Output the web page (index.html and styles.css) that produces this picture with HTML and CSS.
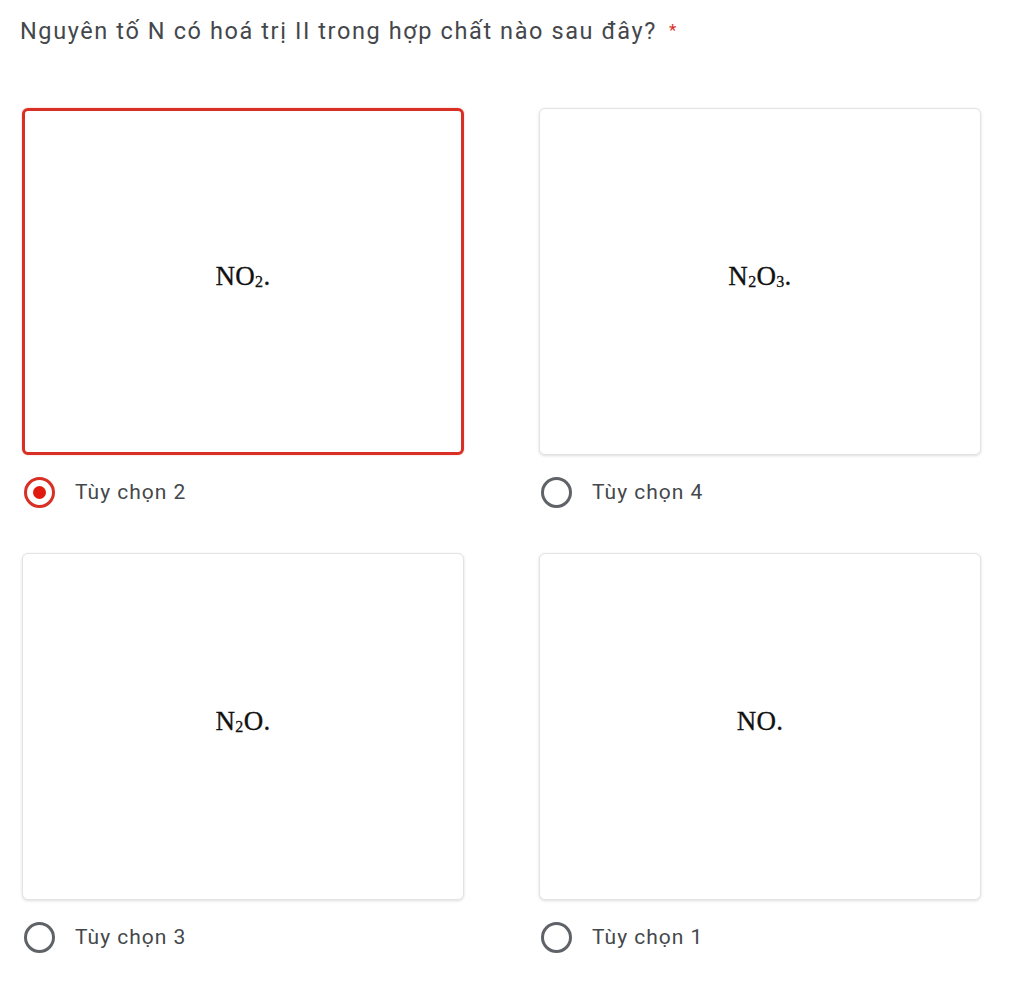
FILE: index.html
```html
<!DOCTYPE html>
<html lang="vi">
<head>
<meta charset="utf-8">
<title>Câu hỏi</title>
<link rel="stylesheet" href="styles.css">
</head>
<body>
<div class="page">
  <div class="question">Nguyên tố N có hoá trị II trong hợp chất nào sau đây?<span class="req">*</span></div>
  <div class="grid">
    <div class="option">
      <div class="card selected"><span class="formula">NO<sub>2</sub>.</span></div>
      <div class="label"><span class="radio checked"></span><span class="text">Tùy chọn 2</span></div>
    </div>
    <div class="option">
      <div class="card"><span class="formula">N<sub>2</sub>O<sub>3</sub>.</span></div>
      <div class="label"><span class="radio"></span><span class="text">Tùy chọn 4</span></div>
    </div>
    <div class="option">
      <div class="card"><span class="formula">N<sub>2</sub>O.</span></div>
      <div class="label"><span class="radio"></span><span class="text">Tùy chọn 3</span></div>
    </div>
    <div class="option">
      <div class="card"><span class="formula">NO.</span></div>
      <div class="label"><span class="radio"></span><span class="text">Tùy chọn 1</span></div>
    </div>
  </div>
</div>
</body>
</html>
```

FILE: styles.css
```css
html, body {
  margin: 0;
  padding: 0;
  background: #ffffff;
}
.page {
  padding: 16px 0 0 22px;
  font-family: Roboto, "Noto Sans", Arial, sans-serif;
}
.question {
  margin-left: -2px;
  height: 28px;
  font-size: 23.5px;
  letter-spacing: 1.6px;
  line-height: 28px;
  color: #44474b;
}
.req {
  color: #d93025;
  font-size: 17px;
  margin-left: 12px;
  vertical-align: 3px;
}
.grid {
  margin-top: 64px;
  display: grid;
  grid-template-columns: 442px 442px;
  column-gap: 75px;
  row-gap: 45px;
}
.card {
  box-sizing: border-box;
  height: 347px;
  border: 1px solid #e3e3e3;
  border-radius: 6px;
  box-shadow: 0 1px 3px rgba(60, 64, 67, 0.18);
  display: flex;
  align-items: center;
  justify-content: center;
  background: #fff;
}
.card.selected {
  border: 3px solid #d93025;
  box-shadow: 0 0 2px rgba(217, 48, 37, 0.35);
}
.formula {
  font-family: "Liberation Serif", "Times New Roman", serif;
  font-size: 27px;
  letter-spacing: 0.3px;
  color: #111;
  padding-bottom: 10px;
  -webkit-text-stroke: 0.3px #111;
}
.formula sub {
  font-size: 16px;
  vertical-align: -2px;
  line-height: 0;
}
.label {
  margin-top: 21px;
  height: 32px;
  display: flex;
  align-items: center;
  gap: 20px;
  padding-left: 2px;
}
.radio {
  box-sizing: border-box;
  width: 31px;
  height: 31px;
  border: 3px solid #5f6368;
  border-radius: 50%;
  display: flex;
  align-items: center;
  justify-content: center;
}
.radio.checked {
  border-color: #d93025;
}
.radio.checked::after {
  content: "";
  width: 13px;
  height: 13px;
  border-radius: 50%;
  background: #e01a0f;
}
.text {
  font-size: 21px;
  letter-spacing: 1px;
  color: #44474b;
}
```
